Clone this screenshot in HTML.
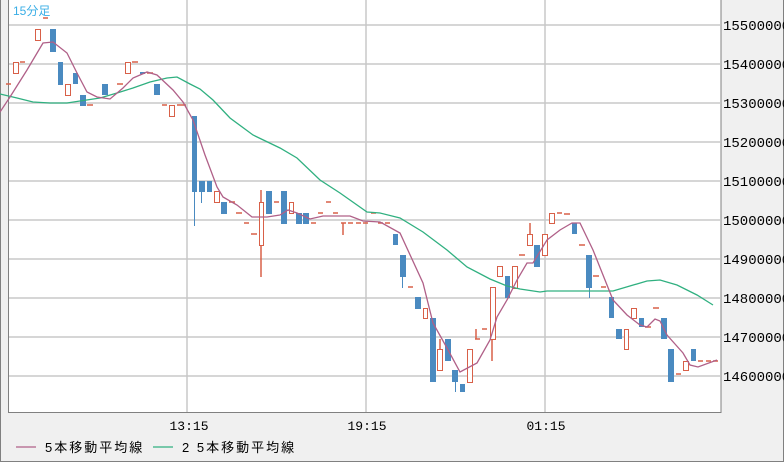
<!DOCTYPE html>
<html><head><meta charset="utf-8"><style>
html,body{margin:0;padding:0;background:#f0f0f0;}
svg{display:block;font-family:"Liberation Sans","Noto Sans CJK JP",sans-serif;}
</style></head><body>
<svg width="784" height="462" viewBox="0 0 784 462" xmlns="http://www.w3.org/2000/svg">
<rect x="0" y="0" width="784" height="462" fill="#f0f0f0"/>
<rect x="0.5" y="-1" width="783" height="462.5" fill="none" stroke="#808080"/>
<rect x="8.5" y="-1" width="712.5" height="413.5" fill="#fff" stroke="#808080"/>
<g stroke="#c8c8c8" stroke-width="1.5">
<line x1="9" y1="25" x2="720" y2="25"/><line x1="9" y1="64" x2="720" y2="64"/>
<line x1="9" y1="103" x2="720" y2="103"/><line x1="9" y1="142" x2="720" y2="142"/>
<line x1="9" y1="181" x2="720" y2="181"/><line x1="9" y1="220" x2="720" y2="220"/>
<line x1="9" y1="259" x2="720" y2="259"/><line x1="9" y1="298" x2="720" y2="298"/>
<line x1="9" y1="337" x2="720" y2="337"/><line x1="9" y1="376" x2="720" y2="376"/>
<line x1="187" y1="0" x2="187" y2="412"/><line x1="366" y1="0" x2="366" y2="412"/>
<line x1="545" y1="0" x2="545" y2="412"/>
</g>
<text x="13" y="15" font-size="12" fill="#3aaee6">15分足</text>
<g fill="#4a8ac0" stroke="none">
<rect x="50" y="29" width="6" height="23"/><rect x="58" y="62" width="5" height="23"/>
<rect x="73" y="73" width="5" height="11"/><rect x="80" y="95" width="6" height="11"/>
<rect x="102" y="84" width="6" height="11"/><rect x="140" y="72" width="5" height="2"/>
<rect x="154" y="84" width="6" height="11"/>
<rect x="192" y="116" width="5" height="76"/><rect x="194" y="190" width="1" height="36"/>
<rect x="199" y="181" width="6" height="11"/><rect x="201" y="190" width="1" height="13"/>
<rect x="207" y="181" width="5" height="11"/><rect x="221" y="202" width="6" height="12"/>
<rect x="266" y="191" width="6" height="23"/><rect x="281" y="191" width="6" height="33"/>
<rect x="296" y="213" width="6" height="11"/><rect x="303" y="213" width="6" height="11"/>
<rect x="393" y="234" width="5" height="11"/><rect x="400" y="255" width="6" height="22"/><rect x="402" y="276" width="1" height="12"/>
<rect x="415" y="297" width="6" height="12"/><rect x="430" y="318" width="6" height="64"/>
<rect x="445" y="339" width="6" height="22"/><rect x="452" y="370" width="6" height="12"/><rect x="455" y="380" width="1" height="12"/>
<rect x="460" y="384" width="5" height="8"/><rect x="505" y="276" width="5" height="22"/>
<rect x="534" y="245" width="6" height="22"/><rect x="572" y="223" width="5" height="11"/>
<rect x="586" y="255" width="6" height="33"/><rect x="589" y="286" width="1" height="12"/>
<rect x="609" y="297" width="5" height="21"/><rect x="616" y="329" width="6" height="10"/>
<rect x="639" y="318" width="5" height="9"/><rect x="661" y="318" width="6" height="21"/>
<rect x="668" y="349" width="6" height="33"/><rect x="691" y="349" width="5" height="12"/>
</g>
<g fill="#fff" stroke="#d86048" stroke-width="1">
<rect x="13.5" y="62.5" width="5" height="11"/><rect x="35.5" y="29.5" width="5" height="11"/>
<rect x="65.5" y="84.5" width="5" height="11"/><rect x="125.5" y="62.5" width="5" height="11"/>
<rect x="169.5" y="105.5" width="5" height="11"/><rect x="214.5" y="191.5" width="5" height="11"/>
<rect x="259.5" y="202.5" width="4" height="43"/><rect x="289.5" y="202.5" width="4" height="11"/>
<rect x="423.5" y="308.5" width="4" height="10"/><rect x="437.5" y="349.5" width="5" height="21"/>
<rect x="467.5" y="349.5" width="5" height="33"/><rect x="490.5" y="287.5" width="5" height="52"/>
<rect x="497.5" y="266.5" width="5" height="10"/><rect x="512.5" y="266.5" width="5" height="22"/>
<rect x="527.5" y="234.5" width="5" height="11"/><rect x="542.5" y="234.5" width="5" height="21"/>
<rect x="549.5" y="213.5" width="5" height="10"/><rect x="624.5" y="329.5" width="4" height="20"/>
<rect x="631.5" y="308.5" width="5" height="10"/><rect x="683.5" y="361.5" width="5" height="9"/>
</g>
<g stroke="#d86048" stroke-width="1.5" fill="none">
<path d="M261 246V277M261 190V202M440 339V349M492 340V361M530 223V234M476 329V339M343 223V235"/>
<path d="M6 84h5M20 62h5M43 18h5M87 105h6M117 84h6M132 62h6M147 73h6M162 105h5M177 105h5M180 105h6M229 202h6M236 213h6M244 223h5M251 234h6M274 202h5M311 223h5M318 213h5M326 202h5M333 213h5M341 223h5M348 223h5M356 223h5M363 223h5M371 213h5M378 223h5M385 223h5M408 287h5M475 339h5M482 329h5M519 255h6M557 213h5M564 214h6M579 245h6M593 276h6M601 287h5M645 327h6M653 308h6M676 374h5M698 361h5M706 361h5M713 361h5"/>
</g>
<polyline fill="none" stroke="#30b080" stroke-width="1.3" points="0,94 17,98 33,102 50,103 67,103 80,101 100,98 117,93 133,88 150,82 167,78 177,77 190,84 200,89 213,100 230,118 253,135 280,148 297,158 320,180 340,193 367,212 380,213 400,218 423,232 447,250 467,267 490,279 507,286 520,289 540,292 547,291 580,291 613,291 647,281 660,280 677,285 697,295 713,305"/>
<polyline fill="none" stroke="#b06088" stroke-width="1.3" points="0,112 10,97 27,70 43,43 53,42 67,53 77,73 87,92 97,97 110,99 123,88 133,78 147,72 157,75 173,90 183,102 193,120 205,155 217,187 223,197 237,205 252,217 267,217 280,215 288,210 297,213 310,219 323,216 350,216 363,221 380,222 400,233 423,283 433,323 447,348 460,372 477,363 490,340 497,317 507,300 517,280 527,263 533,263 547,240 560,230 572,223 580,223 593,250 613,300 627,315 640,325 647,327 655,319 660,321 667,335 683,353 690,365 698,367 717,360"/>
<g font-size="14" fill="#000" font-family="Liberation Mono, monospace">
<text x="723" y="30">15500000</text><text x="723" y="69">15400000</text>
<text x="723" y="108">15300000</text><text x="723" y="147">15200000</text>
<text x="723" y="186">15100000</text><text x="723" y="225">15000000</text>
<text x="723" y="264">14900000</text><text x="723" y="303">14800000</text>
<text x="723" y="342">14700000</text><text x="723" y="381">14600000</text>
</g>
<g font-size="13" fill="#000" font-family="Liberation Mono, monospace">
<text x="189" y="430" text-anchor="middle">13:15</text>
<text x="367" y="430" text-anchor="middle">19:15</text>
<text x="546" y="430" text-anchor="middle">01:15</text>
</g>
<line x1="16" y1="447" x2="36" y2="447" stroke="#b06088" stroke-width="1.3"/>
<line x1="153" y1="447" x2="173" y2="447" stroke="#30b080" stroke-width="1.3"/>
<g font-size="13" fill="#000">
<text x="45" y="452" letter-spacing="2">5本移動平均線</text>
<text x="182" y="452" letter-spacing="2">2 5本移動平均線</text>
</g>
</svg>
</body></html>
